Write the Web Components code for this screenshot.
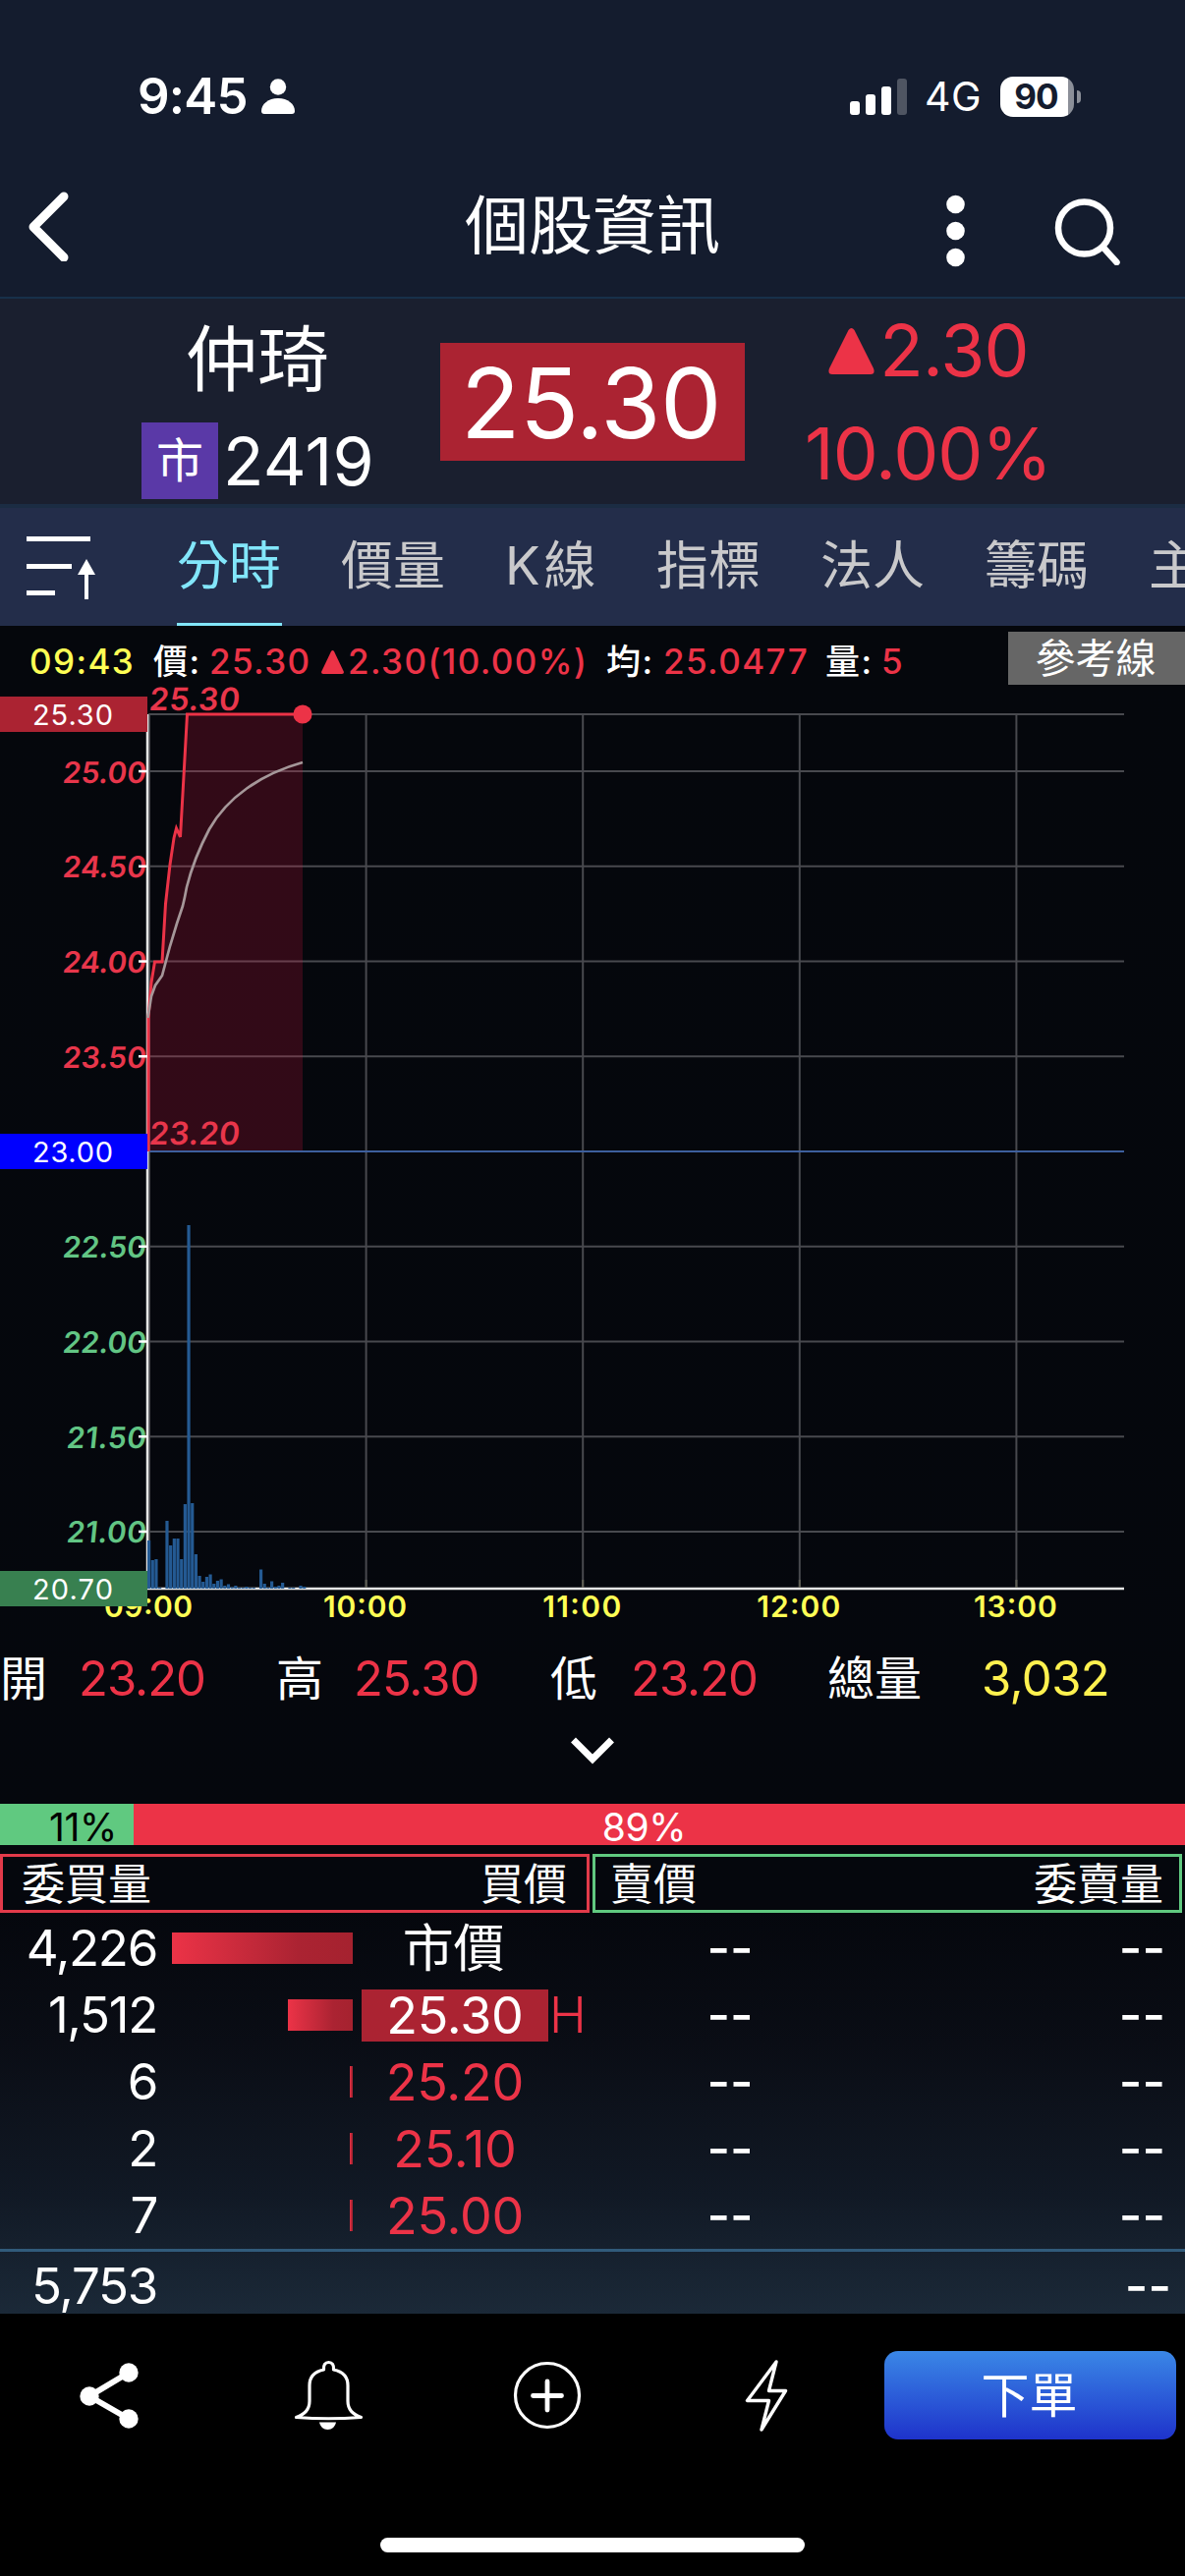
<!DOCTYPE html>
<html lang="zh-Hant">
<head>
<meta charset="utf-8">
<title>個股資訊</title>
<style>
    html, body { margin: 0; padding: 0; background: #000; }
    body {
        --up: #ec3347;
        --up-dark: #ab2332;
        --down: #60c980;
        --yellow: #ffff55;
        width: 1206px;
        height: 2622px;
        overflow: hidden;
        color: #fff;
        font-family: Inter, "Noto Sans CJK TC", sans-serif;
    }
</style>
</head>
<body>
<stock-page></stock-page>

<script>
class StatusBar extends HTMLElement {
    connectedCallback() {
        this.attachShadow({ mode: 'open' });
        this.shadowRoot.innerHTML = `
            <style>
                :host { display: flex; align-items: center; height: 120px; padding: 38px 106px 0 140px; }
                svg { display: block; }
                .time { font-size: 51px; line-height: 60px; font-weight: 600; letter-spacing: -0.8px; width: 125px; white-space: nowrap; }
                .signal { margin-left: auto; }
                .net { font-size: 41px; line-height: 60px; font-weight: 400; letter-spacing: 0.4px; width: 75px; padding-left: 18px; box-sizing: border-box; white-space: nowrap; }
                .battery { display: flex; align-items: center; gap: 3px; margin-left: 20px; }
                .cell {
                    width: 75px; height: 41px; border-radius: 13px; line-height: 41px;
                    background: linear-gradient(90deg, #fff 0 69px, #8b8f98 69px);
                    color: #141c2e; font-size: 35px; font-weight: 700; text-align: center; letter-spacing: -1px;
                    box-sizing: border-box; padding-right: 2px;
                }
                .nub { width: 4px; height: 13px; border-radius: 0 4px 4px 0; background: #8b8f98; }
            </style>
            <span class="time">9:45</span>
            <svg width="36" height="36" viewBox="0 0 36 36" fill="#fff">
                <circle cx="18" cy="8.5" r="8.2"/>
                <path d="M1 33C1 26 8 20 18 20s17 6 17 13c0 2-1 3-3 3H4c-2 0-3-1-3-3z"/>
            </svg>
            <svg class="signal" width="58" height="38" viewBox="0 0 58 38" fill="#fff">
                <rect x="0" y="24" width="10" height="14" rx="3"/>
                <rect x="16" y="17" width="10" height="21" rx="3"/>
                <rect x="32" y="9" width="10" height="29" rx="3"/>
                <rect x="48" y="1" width="10" height="37" rx="3" opacity=".25"/>
            </svg>
            <span class="net">4G</span>
            <span class="battery"><span class="cell">90</span><span class="nub"></span></span>
        `;
    }
}

class TitleBar extends HTMLElement {
    connectedCallback() {
        this.attachShadow({ mode: 'open' });
        this.shadowRoot.innerHTML = `
            <style>
                :host {
                    display: grid; grid-template-columns: 300px 1fr 300px; align-items: center;
                    height: 144px; border-bottom: 2px solid #17304a;
                }
                svg { display: block; }
                .back { margin-left: 27px; }
                .title { text-align: center; font-size: 65px; line-height: 80px; }
                .actions { display: flex; align-items: center; gap: 91px; padding: 9px 0 0 57px; }
            </style>
            <svg class="back" width="44" height="72" viewBox="0 0 44 72" fill="none" stroke="#fff" stroke-width="9" stroke-linecap="round" stroke-linejoin="round"><path d="M38 6 7 37l31 31"/></svg>
            <span class="title"><slot></slot></span>
            <span class="actions">
                <svg width="19" height="74" viewBox="0 0 19 74" fill="#fff"><circle cx="9.5" cy="10" r="9.3"/><circle cx="9.5" cy="37" r="9.3"/><circle cx="9.5" cy="64" r="9.3"/></svg>
                <svg width="70" height="70" viewBox="0 0 70 70" fill="none" stroke="#fff" stroke-width="6.5" stroke-linecap="round"><circle cx="30.5" cy="32" r="26.500"/><path d="m50 52 13.500 15"/></svg>
            </span>
        `;
    }
}

class QuoteHeader extends HTMLElement {
    connectedCallback() {
        this.attachShadow({ mode: 'open' });
        this.shadowRoot.innerHTML = `
            <style>
                :host {
                    display: grid; grid-template-columns: 448px 310px 370px; align-items: start;
                    height: 209px; background: #1a1f2f; border-bottom: 4px solid #1b2c43;
                }
                .name { font-size: 73px; line-height: 90px; margin: 17px 0 0 189px; white-space: nowrap; }
                .code { display: flex; align-items: center; margin: 19px 0 0 144px; font-size: 68px; line-height: 78px; white-space: nowrap; }
                .badge { width: 78px; height: 78px; margin-right: 5px; background: #5a39a7; font-size: 48px; text-align: center; }
                .digits { letter-spacing: 0.3px; }
                .price {
                    box-sizing: border-box; margin-top: 45px; height: 120px; padding-right: 3px; background: var(--up-dark);
                    font-size: 99px; line-height: 122px; text-align: center; letter-spacing: -0.5px;
                }
                .change { color: var(--up); font-size: 73px; text-align: center; white-space: nowrap; }
                .diff { display: flex; align-items: center; justify-content: center; gap: 5px; line-height: 90px; margin: 8px 0 0 4px; letter-spacing: -0.8px; }
                .rate { line-height: 90px; margin: 15px 0 0 3px; letter-spacing: -1px; }
                svg { display: block; }
            </style>
            <div>
                <div class="name">仲琦</div>
                <div class="code"><span class="badge">市</span><span class="digits">2419</span></div>
            </div>
            <div class="price">25.30</div>
            <div class="change">
                <div class="diff">
                    <svg width="47" height="47" viewBox="0 0 47 47" fill="#ec3347"><path d="M20.5 2q3-4 6 0L46 41q2 6-3 6H4q-5 0-3-6z"/></svg>
                    <span>2.30</span>
                </div>
                <div class="rate">10.00%</div>
            </div>
        `;
    }
}

class TabStrip extends HTMLElement {
    connectedCallback() {
        const tabs = ['分時', '價量', 'K線', '指標', '法人', '籌碼', '主'];
        this.attachShadow({ mode: 'open' });
        this.shadowRoot.innerHTML = `
            <style>
                :host { display: flex; height: 120px; background: #232d4a; overflow: hidden; }
                svg { flex: none; display: block; margin: 27px 79px 0 27px; }
                .tabs { display: flex; gap: 60px; }
                .tab {
                    flex: none; box-sizing: border-box; width: 107px; height: 120px; border-bottom: 3px solid transparent;
                    color: #c9c9cb; font-size: 53px; line-height: 119px; white-space: nowrap;
                }
                .tab.narrow { width: 94px; letter-spacing: 4px; }
                .tab.on { color: #82e6fa; border-color: #82e6fa; }
            </style>
            <svg width="74" height="68" viewBox="0 0 74 68" fill="#fff">
                <path d="M0 2h65v5H0zM0 30h46v5H0zM0 57h29v5H0zM59 38h4v28h-4zM61 25l9 16H52z"/>
            </svg>
            <div class="tabs">
                ${tabs.map((t, i) => `<span class="tab${i === 0 ? ' on' : ''}${t === 'K線' ? ' narrow' : ''}">${t}</span>`).join('')}
            </div>
        `;
    }
}

class ChartLegend extends HTMLElement {
    connectedCallback() {
        this.attachShadow({ mode: 'open' });
        this.shadowRoot.innerHTML = `
            <style>
                :host { display: flex; height: 60px; font-size: 35px; line-height: 73px; font-weight: 500; white-space: nowrap; }
                span { flex: none; letter-spacing: 1.4px; }
                svg { display: inline-block; margin-right: 4px; }
                .up { color: var(--up); }
                button {
                    flex: none; width: 180px; height: 54px; margin: 6px 0 0 auto; padding: 0 2px 0 0; border: 0;
                    background: #666; color: #fff; font: 400 41px/54px Inter, "Noto Sans CJK TC", sans-serif;
                }
            </style>
            <span style="width:126px;margin-left:30px;color:var(--yellow)">09:43</span>
            <span style="width:57px">價:</span>
            <span class="up" style="width:114px">25.30</span>
            <span class="up" style="width:290px"><svg width="23" height="24" viewBox="0 0 23 24" fill="#ec3347"><path d="M10 1q1.500-2 3 0l10 21q0 2-2 2H2q-2 0-2-2z"/></svg>2.30(10.00%)</span>
            <span style="width:58px">均:</span>
            <span class="up" style="width:165px">25.0477</span>
            <span style="width:57px">量:</span>
            <span class="up">5</span>
            <button>參考線</button>
        `;
    }
}

class IntradayChart extends HTMLElement {
    connectedCallback() {
        const left = 151, right = 1144, top = 727, bottom = 1617;
        const hour = 220.6, minute = hour / 60;
        const y = price => top + (25.3 - price) * (bottom - top) / 4.6;
        const volumes = [49, 29, 30, 1, 0, 69, 44, 51, 51, 30, 86, 370, 87, 35, 13, 7, 12, 14.5, 5, 8, 9.5, 3, 4.5, 1.5, 3, 1, 1, 2, 1, 1, 0,
            19.5, 5, 1, 7.5, 2, 3, 6, 0, 1, 1, 0, 3, 2];
        const prices = [25, 24.5, 24, 23.5, 22.5, 22, 21.5, 21];
        const hours = ['09:00', '10:00', '11:00', '12:00', '13:00'];
        const line = 'L151 1036 154 1000 157.500 979 165 979 168.500 920 173 880 177 853 179.500 843 183.500 852 187 790 190.500 727 308 727';

        const grid = [25.3, ...prices].map(p => `<path d="M${left} ${y(p)}H${right}"/>`).join('')
            + hours.map((h, i) => `<path d="M${left + 1 + i * hour} ${top}V${bottom}"/>`).join('');
        const bars = volumes.map((v, i) => `<rect x="${(150 + i * minute).toFixed(2)}" y="${bottom - v}" width="3.200" height="${v}"/>`).join('');
        const ticks = prices.map(p => `<path d="M141 ${y(p)}h9"/>`).join('');
        // slanted price text, gentler than the synthetic italic
        const slanted = (x, base, width, text, attrs = '') =>
            `<text transform="translate(${x} ${base}) skewX(-6)" textLength="${width}" ${attrs}>${text}</text>`;
        const labels = prices.map(p => {
            const narrow = p < 22 ? 81 : 85;
            return slanted(148 - narrow, y(p) + 11.5, narrow, p.toFixed(2), `fill="${p > 23 ? '#e8364b' : '#62c584'}"`);
        }).join('');
        const times = hours.map((h, i) => {
            const w = i === 0 ? 90 : i === 2 ? 80 : 85;
            return `<text x="${left + i * hour - w / 2}" y="1646" textLength="${w}">${h}</text>`;
        }).join('');
        const tag = (price, fill) => `<rect x="0" y="${y(price) - 18}" width="150" height="36" fill="${fill}"/>
            <text x="33" y="${y(price) + 11}" textLength="82" fill="#fff">${price.toFixed(2)}</text>`;

        this.attachShadow({ mode: 'open' });
        this.shadowRoot.innerHTML = `
            <style>
                :host { display: block; height: 958px; }
                svg { display: block; overflow: visible; }
                .grid { stroke: #48494e; stroke-width: 2; }
                .axis { stroke: #e6e6e6; stroke-width: 2.5; fill: none; }
                .labels { font-size: 30px; font-weight: 600; }
                .extremes { font-size: 32px; font-weight: 600; fill: #e8364b; }
                .times { font-size: 30px; font-weight: 600; fill: var(--yellow); }
                .tags { font-size: 29px; }
            </style>
            <svg width="1206" height="958" viewBox="0 697 1206 958">
                <g class="grid">${grid}</g>
                <path d="M${left} ${y(23)}H${right}" stroke="#3d5f9d" stroke-width="2"/>
                <path class="axis" d="M150 ${top}V${bottom}H${right}"/>
                <g stroke="#5f5f55" stroke-width="2">${hours.slice(1).map((h, i) => `<path d="M${left + 1 + (i + 1) * hour} 1608v8"/>`).join('')}</g>
                <g fill="#245a93">${bars}</g>
                <path d="M151 1172${line}V1171H151z" fill="#e61b44" fill-opacity=".2"/>
                <path d="M151 1172${line}" fill="none" stroke="#ec3347" stroke-width="3"/>
                <path d="M150.500 1036 154 1014 158 1003 165 993 173 963 180 940 186 922Q188 914 190 903C196 879 204 861 213 844 231 812 265 788 308 776" fill="none" stroke="#a59799" stroke-width="2.700"/>
                <circle cx="308" cy="727" r="9.600" fill="#ec3347"/>
                <g class="labels">${labels}</g>
                <g stroke="#fff" stroke-width="2.500">${ticks}</g>
                <g class="extremes">
                    ${slanted(151, 723, 92, '25.30')}
                    ${slanted(151, 1165, 92, '23.20')}
                </g>
                <g class="times">${times}</g>
                <g class="tags">${tag(25.3, '#ab2332')}${tag(23, '#0000ff')}${tag(20.7, '#388050')}</g>
            </svg>
        `;
    }
}

class DayStats extends HTMLElement {
    connectedCallback() {
        this.attachShadow({ mode: 'open' });
        this.shadowRoot.innerHTML = `
            <style>
                :host { display: block; height: 181px; }
                .row {
                    display: grid; grid-template-columns: 80px 201px 79px 200px 82px 200px 157px 1fr;
                    font-size: 48px; line-height: 108px; white-space: nowrap;
                }
                .num { color: var(--up); font-size: 49px; letter-spacing: -1px; }
                .total { color: #fff14f; letter-spacing: -0.6px; }
                svg { display: block; margin: 5px auto 0; }
            </style>
            <div class="row">
                <span>開</span><span class="num">23.20</span>
                <span>高</span><span class="num">25.30</span>
                <span>低</span><span class="num">23.20</span>
                <span>總量</span><span class="num total">3,032</span>
            </div>
            <svg width="44" height="28" viewBox="0 0 44 28" fill="none" stroke="#fff" stroke-width="7"><path d="m2.500 3 19.500 19.500L41.500 3"/></svg>
        `;
    }
}

class RatioBar extends HTMLElement {
    connectedCallback() {
        this.attachShadow({ mode: 'open' });
        this.shadowRoot.innerHTML = `
            <style>
                :host { display: flex; height: 42px; margin-bottom: 9px; font-size: 39px; line-height: 47px; letter-spacing: -0.3px; }
                .sell { width: 136px; box-sizing: border-box; padding-right: 17px; background: var(--down); color: #000; text-align: right; }
                .buy { flex: 1; box-sizing: border-box; padding-right: 31px; background: var(--up); text-align: center; }
            </style>
            <span class="sell">${this.getAttribute('sell')}%</span>
            <span class="buy">${this.getAttribute('buy')}%</span>
        `;
    }
}

class OrderRow extends HTMLElement {
    connectedCallback() {
        const price = this.getAttribute('price');
        this.attachShadow({ mode: 'open' });
        this.shadowRoot.innerHTML = `
            <style>
                :host {
                    display: grid; grid-template-columns: 160px 199px 9px 190px 42px 286px 1fr; align-items: center;
                    height: 68px; padding-right: 20px; font-size: 51px; line-height: 68px; white-space: nowrap;
                }
                .qty { text-align: right; letter-spacing: -1.3px; }
                .bar { justify-self: end; height: 32px; background: linear-gradient(90deg, #ec3347, #ab2332 70%, #a5222f); }
                .price { grid-column: 4; box-sizing: border-box; height: 53px; line-height: 53px; font-size: 52px; text-align: center; color: var(--up); letter-spacing: -0.2px; }
                :host([market]) .price { color: #fff; padding-right: 3px; }
                :host([limit]) .price { color: #fff; background: var(--up-dark); }
                .flag { font-size: 51px; font-weight: 300; color: var(--up); padding-left: 1px; }
                .ask { text-align: center; font-weight: 500; }
                .ask.last { text-align: right; }
            </style>
            <span class="qty">${this.getAttribute('qty')}</span>
            <span class="bar" style="width:${this.getAttribute('bar')}px"></span>
            <span class="price">${price}</span>
            <span class="flag">${this.hasAttribute('limit') ? 'H' : ''}</span>
            <span class="ask">--</span>
            <span class="ask last">--</span>
        `;
    }
}

class OrderBook extends HTMLElement {
    connectedCallback() {
        this.attachShadow({ mode: 'open' });
        this.shadowRoot.innerHTML = `
            <style>
                :host { display: block; }
                .heads { display: grid; grid-template-columns: 600px 600px; gap: 3px; margin-bottom: 2px; font-size: 44px; line-height: 56px; }
                .head { display: flex; justify-content: space-between; box-sizing: border-box; height: 60px; padding: 0 20px 0 19px; border: 3px solid #e23a4a; }
                .head.ask { border-color: #60c980; padding: 0 16px 0 15px; }
                .total {
                    display: flex; justify-content: space-between; height: 63px; padding: 0 14px 0 0;
                    border-top: 3px solid #315b7b; font-size: 51px; line-height: 69px;
                }
                .total span:first-child { width: 160px; text-align: right; letter-spacing: -1.3px; }
                .total span:last-child { font-weight: 500; }
            </style>
            <div class="heads">
                <div class="head"><span>委買量</span><span>買價</span></div>
                <div class="head ask"><span>賣價</span><span>委賣量</span></div>
            </div>
            <slot></slot>
            <div class="total"><span>5,753</span><span>--</span></div>
        `;
    }
}

class BottomBar extends HTMLElement {
    connectedCallback() {
        this.attachShadow({ mode: 'open' });
        this.shadowRoot.innerHTML = `
            <style>
                :host { display: block; height: 267px; background: #000; }
                .actions { display: grid; grid-template-columns: repeat(4, 222.75px) 1fr; align-items: center; justify-items: center; height: 166px; }
                svg { display: block; }
                button {
                    justify-self: end; width: 297px; height: 90px; margin-right: 9px; padding: 0 2px 0 0; border: 0; border-radius: 14px;
                    background: linear-gradient(#3a87e6, #1e33cb); color: #fff; font: 400 49px/92px Inter, "Noto Sans CJK TC", sans-serif;
                }
                .home { width: 432px; height: 15px; margin: 62px auto 0; border-radius: 8px; background: #fff; }
            </style>
            <div class="actions">
                <svg width="76" height="76" viewBox="0 0 76 76" fill="#fff"><path d="M58 15 18 39l40 23" fill="none" stroke="#fff" stroke-width="6"/><circle cx="58" cy="15" r="9.700"/><circle cx="18" cy="39" r="9.700"/><circle cx="58" cy="62" r="9.700"/></svg>
                <svg width="76" height="76" viewBox="0 0 76 76" fill="none" stroke="#fff" stroke-width="3.200" stroke-linejoin="round">
                    <path d="M33.500 12C33 7 35 4.500 38.500 4.500S44 7 43.500 12C53 14 58 20 58 28V44C58 53 63 57 71.500 60.500Q38 63 5.500 60.500C14 57 19 53 19 44V28C19 20 24 14 33.500 12z"/>
                    <path d="M29 65.500H46C45 70 42 73 37.500 73S30 70 29 65.500z" fill="#fff" stroke="none"/>
                </svg>
                <svg width="76" height="76" viewBox="0 0 76 76" fill="none" stroke="#fff" stroke-width="3.200" stroke-linecap="round"><circle cx="38" cy="38" r="32.500"/><path d="M23.500 38.500h29M38 24v29" stroke-width="4.800"/></svg>
                <svg width="76" height="76" viewBox="0 0 76 76" fill="none" stroke="#fff" stroke-width="3.400" stroke-linejoin="round"><path d="M48 4 18.500 43.500H40.500L33 73 57.500 33.500H40.500z"/></svg>
                <button>下單</button>
            </div>
            <div class="home"></div>
        `;
    }
}

class StockPage extends HTMLElement {
    connectedCallback() {
        this.attachShadow({ mode: 'open' });
        this.shadowRoot.innerHTML = `
            <style>
                :host { display: block; width: 1206px; }
                .top { background: #141c2e; }
                .body { background: linear-gradient(#05070c 0, #05070d 76%, #0a0d15 84%, #111925 93%, #1b2938 100%); }
            </style>
            <div class="top">
                <status-bar></status-bar>
                <title-bar>個股資訊</title-bar>
            </div>
            <quote-header></quote-header>
            <tab-strip></tab-strip>
            <div class="body">
                <chart-legend></chart-legend>
                <intraday-chart></intraday-chart>
                <day-stats></day-stats>
                <ratio-bar sell="11" buy="89"></ratio-bar>
                <order-book>
                    <order-row qty="4,226" bar="184" price="市價" market></order-row>
                    <order-row qty="1,512" bar="66" price="25.30" limit></order-row>
                    <order-row qty="6" bar="3" price="25.20"></order-row>
                    <order-row qty="2" bar="3" price="25.10"></order-row>
                    <order-row qty="7" bar="3" price="25.00"></order-row>
                </order-book>
            </div>
            <bottom-bar></bottom-bar>
        `;
    }
}

customElements.define('status-bar', StatusBar);
customElements.define('title-bar', TitleBar);
customElements.define('quote-header', QuoteHeader);
customElements.define('tab-strip', TabStrip);
customElements.define('chart-legend', ChartLegend);
customElements.define('intraday-chart', IntradayChart);
customElements.define('day-stats', DayStats);
customElements.define('ratio-bar', RatioBar);
customElements.define('order-row', OrderRow);
customElements.define('order-book', OrderBook);
customElements.define('bottom-bar', BottomBar);
customElements.define('stock-page', StockPage);
</script>
</body>
</html>
